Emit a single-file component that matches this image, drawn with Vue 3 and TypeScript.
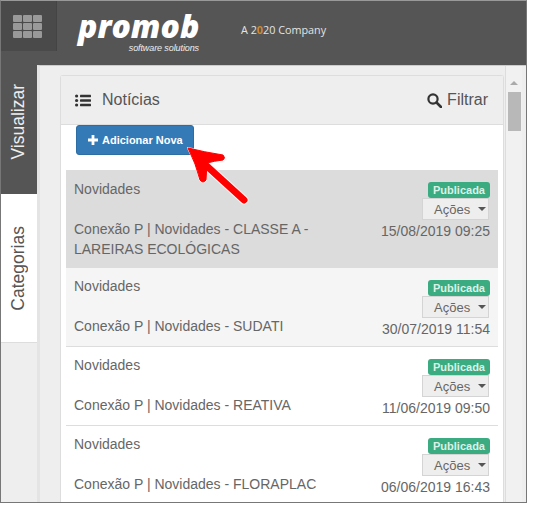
<template>
  <div class="frame">
    <header class="topbar">
      <button class="apps" aria-label="Menu">
        <span v-for="n in 9" :key="n" class="cell"></span>
      </button>
      <div class="logo">
        <span class="logo-name">promob</span>
        <span class="logo-sub">software solutions</span>
      </div>
      <div class="company">A 2<span class="orange">0</span>20 Company</div>
    </header>

    <div class="body">
      <nav class="tabs">
        <div class="tab active"><span>Visualizar</span></div>
        <div class="tab"><span>Categorias</span></div>
      </nav>

      <main class="content">
        <section class="panel">
          <div class="panel-head">
            <div class="panel-title">
              <svg class="list-icon" width="16" height="13" viewBox="0 0 16 13">
                <circle cx="1.6" cy="2" r="1.6" />
                <circle cx="1.6" cy="6.5" r="1.6" />
                <circle cx="1.6" cy="11" r="1.6" />
                <rect x="5" y="0.8" width="11" height="2.4" rx="0.4" />
                <rect x="5" y="5.3" width="11" height="2.4" rx="0.4" />
                <rect x="5" y="9.8" width="11" height="2.4" rx="0.4" />
              </svg>
              <span>Notícias</span>
            </div>
            <div class="filter">
              <svg width="15" height="15" viewBox="0 0 15 15" fill="none" stroke="#333" stroke-width="2.2">
                <circle cx="6" cy="6" r="4.6" />
                <path d="M9.5 9.5 14 14" stroke-linecap="round" stroke-width="2.6" />
              </svg>
              <span>Filtrar</span>
            </div>
          </div>

          <div class="panel-body">
            <button class="add-btn">
              <svg width="10" height="10" viewBox="0 0 10 10" fill="#fff">
                <path d="M3.6 0h2.8v3.6H10v2.8H6.4V10H3.6V6.4H0V3.6h3.6z" />
              </svg>
              Adicionar Nova
            </button>

            <ul class="news">
              <li v-for="item in news" :key="item.title" class="row" :class="item.state">
                <div class="row-left">
                  <div class="category">Novidades</div>
                  <div class="title">{{ item.title }}</div>
                </div>
                <div class="row-right">
                  <span class="badge">Publicada</span>
                  <button class="actions">Ações <i class="caret"></i></button>
                  <div class="date">{{ item.date }}</div>
                </div>
              </li>
            </ul>
          </div>
        </section>

        <div class="scrollbar">
          <i class="up"></i>
          <div class="thumb"></div>
        </div>
      </main>
    </div>

    <svg class="arrow" width="66" height="62" viewBox="0 0 66 62">
      <g fill="#fff" stroke="#fff" stroke-width="2" stroke-linejoin="round" opacity="0.8">
        <path d="M4 4 Q20 8 39 11 Q42 14 39 16 Q30 17 23 19 L22 36 Q19 40 16 36 Q12 20 4 4 Z" />
        <path d="M14 14 60 56" stroke-width="9" stroke-linecap="round" />
      </g>
      <g fill="#f00" stroke="#f00" stroke-linejoin="round">
        <path d="M4 4 Q20 8 39 11 Q42 14 39 16 Q30 17 23 19 L22 36 Q19 40 16 36 Q12 20 4 4 Z" />
        <path d="M14 14 60 56" stroke-width="7" stroke-linecap="round" />
      </g>
    </svg>
  </div>
</template>

<script setup lang="ts">
interface NewsItem {
  title: string;
  date: string;
  state: string;
}

const news: NewsItem[] = [
  {
    title: "Conexão P | Novidades - CLASSE A - LAREIRAS ECOLÓGICAS",
    date: "15/08/2019 09:25",
    state: "selected",
  },
  { title: "Conexão P | Novidades - SUDATI", date: "30/07/2019 11:54", state: "hover" },
  { title: "Conexão P | Novidades - REATIVA", date: "11/06/2019 09:50", state: "" },
  { title: "Conexão P | Novidades - FLORAPLAC", date: "06/06/2019 16:43", state: "" },
];
</script>

<style>
html,
body {
  margin: 0;
  background: #fff;
  overflow: hidden;
}
</style>

<style scoped>
.frame {
  position: relative;
  box-sizing: border-box;
  width: 527px;
  height: 503px;
  border: 1px solid #777;
  border-top-color: #999;
  overflow: hidden;
  display: flex;
  flex-direction: column;
  font-family: "Liberation Sans", Arial, sans-serif;
  font-size: 14px;
  color: #666;
}

.topbar {
  flex: none;
  height: 64px;
  background: #555;
  display: flex;
  align-items: flex-start;
}
.apps {
  width: 56px;
  height: 50px;
  padding: 14px 0 0 12px;
  box-sizing: border-box;
  border: none;
  border-right: 1px solid #444;
  background: #4a4a4a;
  display: grid;
  grid-template-columns: repeat(3, 9px);
  grid-auto-rows: 7px;
  gap: 1px;
  align-content: start;
}
.cell {
  background: #999;
  border-radius: 1px;
}
.logo {
  margin: 9px 0 0 21px;
  width: 122px;
  display: flex;
  flex-direction: column;
  color: #fff;
}
.logo-name {
  font-family: "Open Sans", sans-serif;
  font-weight: 800;
  font-style: italic;
  font-size: 32px;
  line-height: 32px;
  letter-spacing: 0;
}
.logo-sub {
  align-self: flex-end;
  margin: 1px 1px 0 0;
  font-style: italic;
  font-size: 9px;
  line-height: 10px;
  letter-spacing: -0.1px;
  color: #eee;
}
.company {
  margin: 22px 0 0 41px;
  font-family: "Open Sans", sans-serif;
  font-size: 10.8px;
  line-height: 14px;
  color: #e4e4e4;
}
.orange {
  color: #d08a2e;
  font-weight: 700;
}

.body {
  flex: 1;
  min-height: 0;
  display: flex;
}
.tabs {
  flex: none;
  width: 36px;
  background: #eee;
}
.tab {
  box-sizing: border-box;
  height: 148px;
  padding-right: 1px;
  background: #fff;
  border-bottom: 1px solid #ddd;
  display: flex;
  align-items: center;
  justify-content: center;
  color: #555;
  font-size: 17.5px;
}
.tab span {
  writing-mode: vertical-rl;
  transform: rotate(180deg);
}
.tab.active {
  height: 130px;
  padding-bottom: 16px;
  background: #555;
  color: #eee;
  border-bottom: 1px solid #fff;
}

.content {
  flex: 1;
  min-width: 0;
  background: #eee;
  border-left: 3px solid #e4e4e4;
  border-top: 1px solid #ccc;
  padding: 9px 0 0 20px;
  display: flex;
  overflow: hidden;
}

.panel {
  width: 444px;
  flex: none;
  background: #fff;
  border: 1px solid #ddd;
  border-bottom: none;
  box-sizing: border-box;
  border-radius: 3px 3px 0 0;
}
.panel-head {
  box-sizing: border-box;
  height: 49px;
  background: #eee;
  border-bottom: 1px solid #ddd;
  padding: 0 15px 0 14px;
  display: flex;
  align-items: center;
  justify-content: space-between;
  font-size: 16px;
}
.panel-title {
  display: flex;
  align-items: center;
  gap: 11px;
  color: #555;
}
.list-icon {
  fill: #333;
  flex: none;
}
.filter {
  display: flex;
  align-items: center;
  gap: 5px;
  color: #555;
}

.panel-body {
  padding: 0 5px;
}
.add-btn {
  display: flex;
  align-items: center;
  gap: 4px;
  box-sizing: border-box;
  width: 118px;
  height: 30px;
  margin: 0 0 15px 10px;
  padding: 0 0 0 11px;
  border: 1px solid #2e6da4;
  border-radius: 3px;
  background: #337ab7;
  color: #fff;
  font-family: "Liberation Sans", Arial, sans-serif;
  font-size: 11px;
  font-weight: 700;
}

.news {
  list-style: none;
  margin: 0;
  padding: 0;
}
.row {
  box-sizing: border-box;
  min-height: 79px;
  padding: 8px 8px 7px 8px;
  border-bottom: 1px solid #ddd;
  display: flex;
  justify-content: space-between;
  gap: 10px;
}
.row.selected {
  background: #dcdcdc;
  border-bottom: 1px solid #dcdcdc;
  min-height: 98px;
  padding-top: 9px;
}
.row.selected .row-right {
  padding-top: 3px;
}
.row.hover {
  background: #f5f5f5;
}
.row-left {
  width: 250px;
}
.category {
  line-height: 20px;
  margin-bottom: 20px;
}
.title {
  line-height: 20px;
}
.row-right {
  display: flex;
  flex-direction: column;
  align-items: flex-end;
  padding-top: 4px;
}
.badge {
  box-sizing: border-box;
  width: 62px;
  height: 16px;
  background: #3bab82;
  border-radius: 3px;
  color: #d9f2e8;
  font-size: 11px;
  font-weight: 700;
  line-height: 16px;
  text-align: center;
}
.actions {
  box-sizing: border-box;
  width: 67px;
  height: 22px;
  margin-right: 1px;
  padding: 0 0 0 11px;
  border: 1px solid #d4d4d4;
  background: #eee;
  color: #666;
  font-family: "Liberation Sans", Arial, sans-serif;
  font-size: 13px;
  text-align: left;
  display: flex;
  align-items: center;
  gap: 8px;
  white-space: nowrap;
}
.caret {
  width: 0;
  height: 0;
  border-left: 4px solid transparent;
  border-right: 4px solid transparent;
  border-top: 4px solid #555;
}
.date {
  margin-top: 1px;
  line-height: 20px;
  white-space: nowrap;
}

.scrollbar {
  margin: -9px 0 0 1px;
  width: 16px;
  flex: none;
  background: #f1f1f1;
  border-left: 1px solid #ddd;
  position: relative;
}
.scrollbar .up {
  position: absolute;
  top: 15px;
  left: 4px;
  border-left: 4px solid transparent;
  border-right: 4px solid transparent;
  border-bottom: 4px solid #aaa;
}
.thumb {
  position: absolute;
  top: 26px;
  left: 2px;
  width: 13px;
  height: 39px;
  background: #b8b8b8;
}

.arrow {
  position: absolute;
  left: 183px;
  top: 143px;
  pointer-events: none;
}
</style>
